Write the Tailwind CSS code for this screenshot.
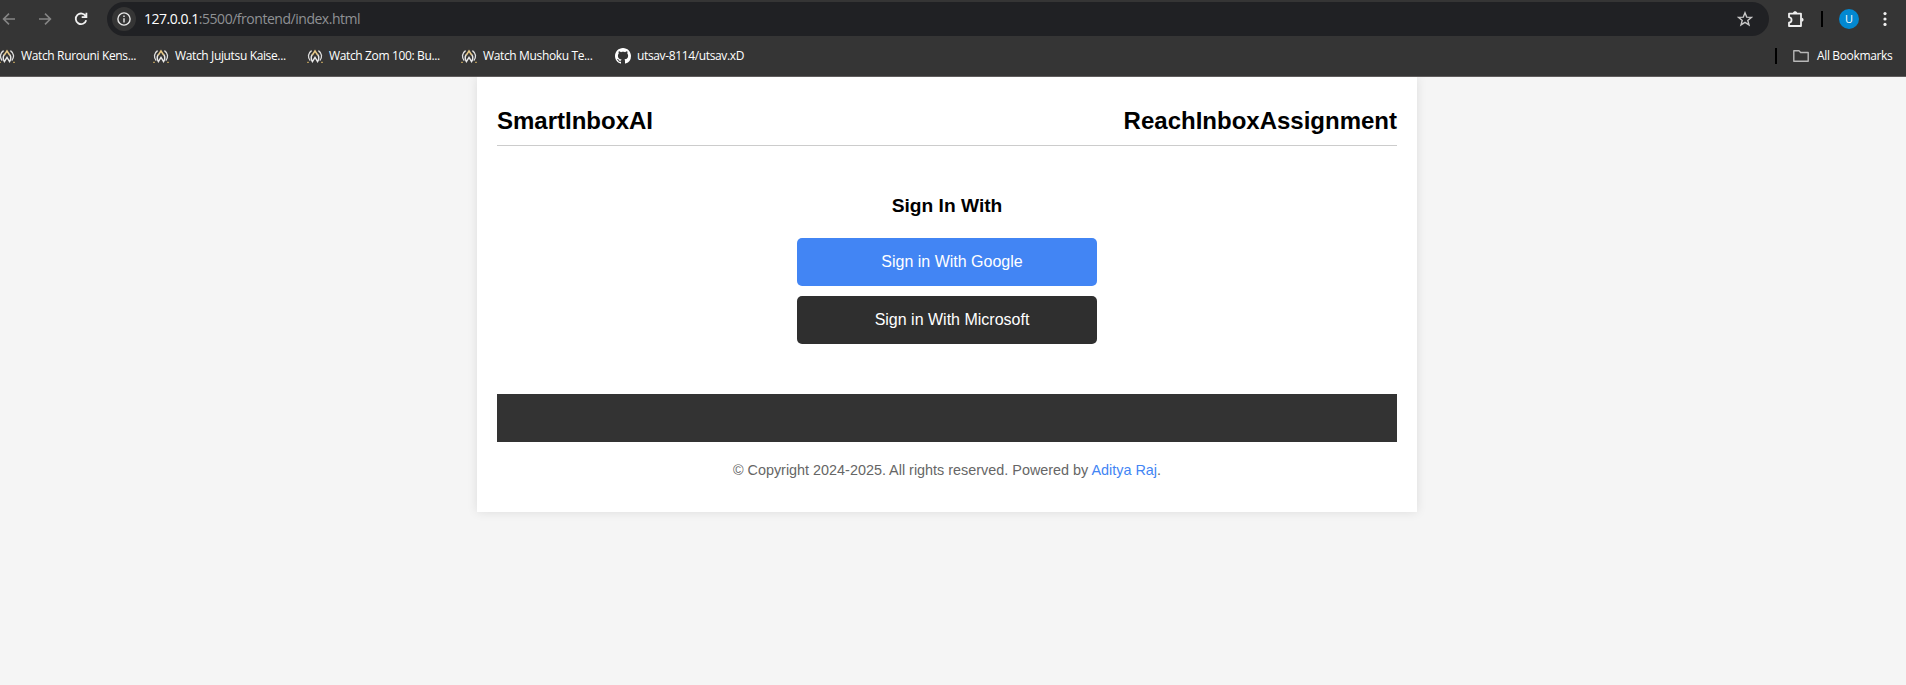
<!DOCTYPE html>
<html lang="en">
<head>
<meta charset="utf-8">
<title>SmartInboxAI</title>
<script src="https://cdn.jsdelivr.net/npm/@tailwindcss/browser@4"></script>
</head>
<body class="h-[685px] overflow-hidden bg-[#f5f5f5] flex flex-col font-['Liberation_Sans',Arial,sans-serif]">
<svg class="hidden">
  <symbol id="wings" viewBox="0 0 16 16">
    <path d="M4.600 2.600C.9 5.200.5 9.200 3.200 12.600M11.400 2.600C15.100 5.200 15.500 9.200 12.800 12.600" fill="none" stroke="#dedede" stroke-width="1.300"/>
    <path d="M5.700 6C3.900 8.300 3.800 11 5.400 13.600L8 9.400L10.600 13.600C12.200 11 12.100 8.300 10.300 6" fill="none" stroke="#e8e8e8" stroke-width="1.400"/>
    <path d="M5.300 7.200L8 3L10.700 7.200" fill="none" stroke="#e8c987" stroke-width="1.500"/>
    <path d="M.2 14.300h1.600M14.200 14.300h1.600" stroke="#c9a860" stroke-width="1.200"/>
  </symbol>
</svg>
<div class="h-[77px] shrink-0 bg-[#353535] border-b border-[#5f5c5c] font-['Open_Sans','Noto_Sans',sans-serif] text-white">
  <div class="h-[38px] flex items-center">
    <svg class="w-5 h-5 ml-[-1px] shrink-0" viewBox="0 0 20 20" fill="none" stroke="#858585" stroke-width="1.600"><path d="M16 10H5M10 4.600L4.600 10L10 15.400"/></svg>
    <svg class="w-5 h-5 ml-[16px] shrink-0" viewBox="0 0 20 20" fill="none" stroke="#858585" stroke-width="1.600"><path d="M4 10h11M10 4.600L15.400 10L10 15.400"/></svg>
    <svg class="w-5 h-5 ml-[16px] shrink-0" viewBox="0 0 20 20" fill="none" stroke="#f0f0f0" stroke-width="1.800"><path d="M14.800 7.400A5.300 5.300 0 1 0 15.200 11.200M15.400 3.700v4.500h-4.700"/></svg>
    <div class="ml-[16px] h-[34px] w-[1662px] shrink-0 rounded-full bg-[#202124] flex items-center pl-[5px] pr-[16px]">
      <div class="w-6 h-6 rounded-full bg-[#353535] flex items-center justify-center shrink-0">
        <svg class="w-[14px] h-[14px]" viewBox="0 0 14 14" fill="none" stroke="#e8e8e8" stroke-width="1.400"><circle cx="7" cy="7" r="6.100"/><path d="M7 6.200v4.200M7 3.500v1.500"/></svg>
      </div>
      <div class="ml-[8px] text-[14px] tracking-[-0.47px] leading-5 whitespace-nowrap text-[#8f9194] grow"><span class="text-white">127.0.0.1</span>:5500/frontend/index.html</div>
      <svg class="w-4 h-4" viewBox="0 0 16 16" fill="none" stroke="#c8c8c8" stroke-width="1.400"><path d="M8 1.800L9.700 6.100L14.400 6.400L10.800 9.400L12 13.900L8 11.400L4 13.900L5.200 9.400L1.600 6.400L6.300 6.100Z"/></svg>
    </div>
    <svg class="w-[18px] h-[18px] ml-[18px] shrink-0" viewBox="0 0 18 18" fill="none" stroke="#f0f0f0" stroke-width="1.800" stroke-linejoin="round"><path d="M2 3.700H14V16H2V12.700C5.400 12.200 5.400 7.700 2 7.200Z"/><path d="M6 3C6.200.6 10 .6 10.200 3ZM14.700 7.700C17.200 8 17.200 11.500 14.700 11.800Z" fill="#f0f0f0" stroke="none"/></svg>
    <div class="w-[2px] h-4 bg-black ml-[16px] shrink-0"></div>
    <div class="w-5 h-5 rounded-full bg-[#0288d1] ml-[16px] shrink-0 text-[11px] flex items-center justify-center">U</div>
    <svg class="w-4 h-4 ml-[18px] shrink-0" viewBox="0 0 16 16" fill="#f0f0f0"><circle cx="8" cy="2.600" r="1.600"/><circle cx="8" cy="8" r="1.600"/><circle cx="8" cy="13.400" r="1.600"/></svg>
  </div>
  <div class="h-[36px] flex items-center text-[12px] tracking-[-0.36px] font-medium leading-4 whitespace-nowrap">
    <div class="w-[154px] shrink-0 flex items-center gap-[6px] ml-[-1px]"><svg class="w-4 h-4"><use href="#wings"/></svg><span>Watch Rurouni Kens...</span></div>
    <div class="w-[154px] shrink-0 flex items-center gap-[6px]"><svg class="w-4 h-4"><use href="#wings"/></svg><span>Watch Jujutsu Kaise...</span></div>
    <div class="w-[154px] shrink-0 flex items-center gap-[6px]"><svg class="w-4 h-4"><use href="#wings"/></svg><span>Watch Zom 100: Bu...</span></div>
    <div class="w-[154px] shrink-0 flex items-center gap-[6px]"><svg class="w-4 h-4"><use href="#wings"/></svg><span>Watch Mushoku Te...</span></div>
    <div class="grow flex items-center gap-[6px]"><svg class="w-4 h-4" viewBox="0 0 16 16" fill="#fff"><path d="M8 0C3.580 0 0 3.580 0 8c0 3.540 2.290 6.530 5.470 7.590.4.070.55-.17.55-.38 0-.19-.01-.82-.01-1.490-2.010.37-2.530-.49-2.690-.94-.09-.23-.48-.94-.82-1.130-.28-.15-.68-.52-.01-.53.63-.01 1.080.58 1.230.82.72 1.210 1.870.87 2.330.66.07-.52.28-.87.51-1.070-1.780-.2-3.640-.89-3.640-3.950 0-.87.31-1.590.82-2.150-.08-.2-.36-1.020.08-2.120 0 0 .67-.21 2.200.82.64-.18 1.320-.27 2-.27s1.360.09 2 .27c1.530-1.040 2.200-.82 2.200-.82.44 1.100.16 1.920.08 2.120.51.56.82 1.270.82 2.150 0 3.070-1.870 3.750-3.650 3.950.29.25.54.73.54 1.480 0 1.070-.01 1.930-.01 2.200 0 .21.15.46.55.38A8.010 8.010 0 0 0 16 8c0-4.420-3.580-8-8-8Z"/></svg><span>utsav-8114/utsav.xD</span></div>
    <div class="w-[131px] shrink-0 flex items-center">
      <div class="w-[2px] h-4 bg-black"></div>
      <svg class="w-4 h-3 ml-[16px] mr-[8px]" viewBox="0 0 16 12" fill="none" stroke="#b8b8b8" stroke-width="1.400" stroke-linejoin="round"><path d="M.8.8H6L7.600 2.500H15.200V11.200H.8Z"/></svg>
      <span>All Bookmarks</span>
    </div>
  </div>
</div>
<div class="grow overflow-hidden">
  <main class="ml-[477px] w-[940px] h-[435px] bg-white px-5 pt-5 shadow-[0_0_10px_rgba(0,0,0,0.1)]">
    <header class="h-[49px] border-b border-[#ccc] pt-[10px] flex justify-between text-2xl leading-[27px] font-bold text-black">
      <h1>SmartInboxAI</h1><h1>ReachInboxAssignment</h1>
    </header>
    <section class="h-[248px] flex flex-col items-center pt-[49px]">
      <h2 class="text-[19.2px] leading-[22px] font-bold text-black">Sign In With</h2>
      <button class="mt-[21px] w-[300px] h-12 rounded-[5px] bg-[#4285f4] text-white text-base pl-[10px]">Sign in With Google</button>
      <button class="mt-[10px] w-[300px] h-12 rounded-[5px] bg-[#2f2f2f] text-white text-base pl-[10px]">Sign in With Microsoft</button>
    </section>
    <div class="h-12 bg-[#333]"></div>
    <footer class="pt-5 text-center text-[14.4px] leading-4 text-[#666]">© Copyright 2024-2025. All rights reserved. Powered by <a class="text-[#4285f4]">Aditya Raj</a>.</footer>
  </main>
</div>
</body>
</html>
